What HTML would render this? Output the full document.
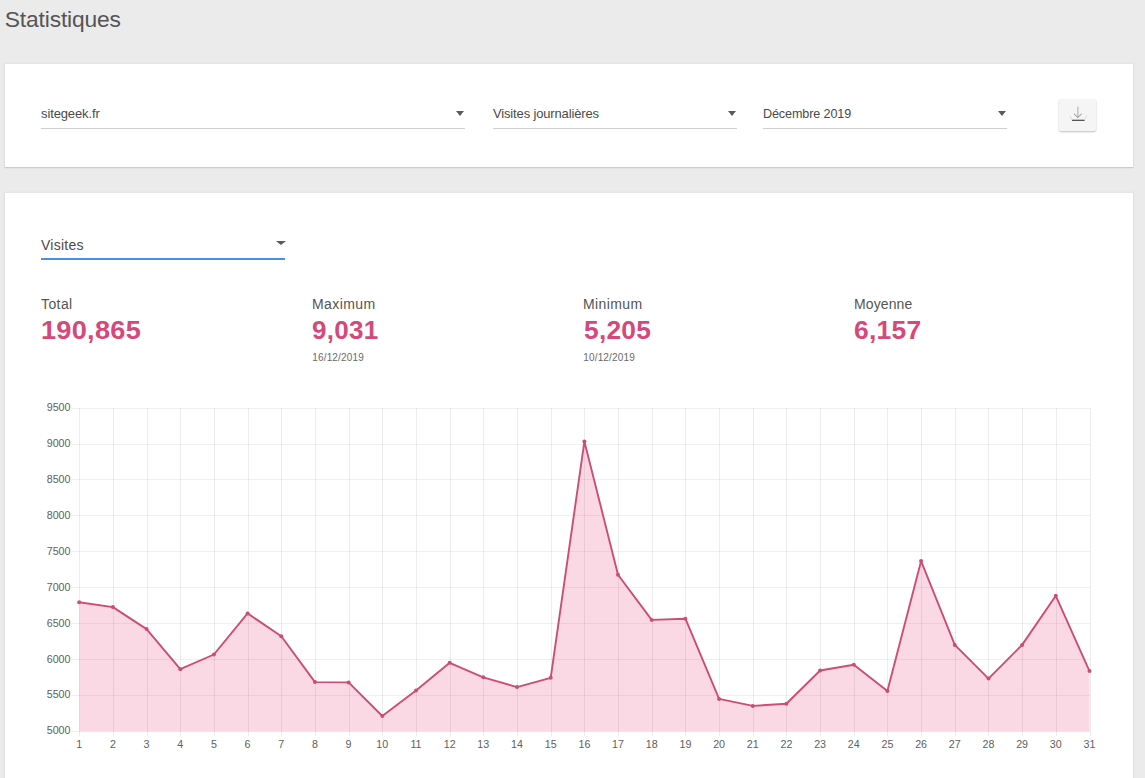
<!DOCTYPE html>
<html lang="fr"><head><meta charset="utf-8"><title>Statistiques</title>
<style>
html,body{margin:0;padding:0;}
body{width:1145px;height:778px;overflow:hidden;background:#ecebeb;font-family:"Liberation Sans",sans-serif;color:#444;position:relative;}
.abs{position:absolute;white-space:nowrap;}
h1{position:absolute;left:4.8px;top:4.5px;margin:0;font-size:22.8px;font-weight:normal;color:#555;line-height:28px;letter-spacing:-0.15px;}
.card{position:absolute;left:5px;width:1128px;background:#fff;box-shadow:0 1px 1px rgba(0,0,0,0.11),0 0 0 1.5px rgba(0,0,0,0.025);}
.c1{top:64px;height:103px;}
.c2{top:193px;height:600px;}
.sel{position:absolute;height:30px;border-bottom:1px solid #cfcfcf;font-size:13px;color:#4a4a4a;line-height:32px;}
.sel .arr{position:absolute;right:1px;top:13px;width:0;height:0;border-left:4.5px solid transparent;border-right:4.5px solid transparent;border-top:5px solid #5a5a5a;}
.sel.act{border-bottom:2px solid #4a90e2;height:28.5px;line-height:32px;letter-spacing:0.25px;}
.sel.act .arr{top:12px;border-left-width:5px;border-right-width:5px;border-top-width:4.5px;right:-0.5px;}
.btn{position:absolute;left:1059px;top:99px;width:37px;height:32px;background:#f5f5f5;border-radius:2px;box-shadow:0 1px 2px rgba(0,0,0,0.25);}
.lbl{font-size:14px;color:#555;line-height:16px;letter-spacing:0.4px;}
.val{font-size:25.5px;font-weight:bold;color:#d6487a;line-height:28px;letter-spacing:0.25px;transform:scaleX(1.05);transform-origin:0 0;margin-left:0.3px;}
.dt{font-size:10px;color:#6a6a6a;line-height:12px;letter-spacing:0.15px;}
.chart{position:absolute;left:0;top:0;}
</style></head><body>
<h1>Statistiques</h1>
<div class="card c1"></div>
<div class="card c2"></div>
<div class="sel" style="left:41px;top:98px;width:424px;letter-spacing:-0.12px;">sitegeek.fr<span class="arr"></span></div>
<div class="sel" style="left:493px;top:98px;width:244px;letter-spacing:-0.15px;">Visites journalières<span class="arr"></span></div>
<div class="sel" style="left:763px;top:98px;width:244px;font-size:12.6px;letter-spacing:-0.12px;">Décembre 2019<span class="arr"></span></div>
<div class="btn"><svg width="37" height="32" viewBox="0 0 37 32"><path d="M18.9 7.5v11" fill="none" stroke="#aaa" stroke-width="1"/><path d="M15 14.8l3.9 3.6 3.9-3.6" fill="none" stroke="#888" stroke-width="1"/><path d="M13 21.3h12.6" fill="none" stroke="#444" stroke-width="1.2"/><path d="M11 16.5l2 4.5M27.6 16.5l-2 4.5" fill="none" stroke="#ddd" stroke-width="1"/></svg></div>
<div class="sel act" style="left:41px;top:229px;width:244px;font-size:14px;">Visites<span class="arr"></span></div>

<div class="abs lbl" style="left:41px;top:296px;">Total</div>
<div class="abs val" style="left:40.4px;top:316.4px;transform:scaleX(1.065)">190,865</div>
<div class="abs lbl" style="left:312px;top:296px;">Maximum</div>
<div class="abs val" style="left:312px;top:316.4px;transform:scaleX(1.02)">9,031</div>
<div class="abs dt" style="left:312.3px;top:351.5px;">16/12/2019</div>
<div class="abs lbl" style="left:583px;top:296px;">Minimum</div>
<div class="abs val" style="left:583.3px;top:316.4px;transform:scaleX(1.031)">5,205</div>
<div class="abs dt" style="left:583.3px;top:351.5px;">10/12/2019</div>
<div class="abs lbl" style="left:854px;top:296px;letter-spacing:0.1px;">Moyenne</div>
<div class="abs val" style="left:854px;top:316.4px;transform:scaleX(1.037)">6,157</div>
<svg class="chart" width="1145" height="778" viewBox="0 0 1145 778">
<path d="M79.5 408V736.2 M113.5 408V736.2 M147.5 408V736.2 M180.5 408V736.2 M214.5 408V736.2 M248.5 408V736.2 M281.5 408V736.2 M315.5 408V736.2 M349.5 408V736.2 M382.5 408V736.2 M416.5 408V736.2 M450.5 408V736.2 M483.5 408V736.2 M517.5 408V736.2 M551.5 408V736.2 M584.5 408V736.2 M618.5 408V736.2 M652.5 408V736.2 M685.5 408V736.2 M719.5 408V736.2 M753.5 408V736.2 M786.5 408V736.2 M820.5 408V736.2 M854.5 408V736.2 M887.5 408V736.2 M921.5 408V736.2 M955.5 408V736.2 M988.5 408V736.2 M1022.5 408V736.2 M1056.5 408V736.2 M1090.5 408V736.2" stroke="rgba(0,0,0,0.075)" stroke-width="1" fill="none"/>
<path d="M72 731.5H1090 M72 695.5H1090 M72 659.5H1090 M72 623.5H1090 M72 587.5H1090 M72 551.5H1090 M72 515.5H1090 M72 479.5H1090 M72 444.5H1090 M72 408.5H1090" stroke="rgba(0,0,0,0.06)" stroke-width="1" fill="none"/>
<path d="M79.2 602.3 L112.9 607.1 L146.6 629.1 L180.3 669.2 L213.9 654.5 L247.6 613.4 L281.3 636.2 L315.0 682.1 L348.6 682.4 L382.3 716.0 L416.0 690.4 L449.7 662.8 L483.3 677.3 L517.0 687.1 L550.7 677.8 L584.4 441.4 L618.0 574.7 L651.7 619.9 L685.4 618.7 L719.1 698.9 L752.8 705.9 L786.4 703.8 L820.1 670.5 L853.8 664.7 L887.4 690.9 L921.1 561.1 L954.8 644.9 L988.5 678.6 L1022.1 644.9 L1055.8 595.8 L1089.5 671.1 L1089.5 731.2 L79.2 731.2 Z" fill="rgba(233,80,130,0.22)"/>
<path d="M79.2 602.3 L112.9 607.1 L146.6 629.1 L180.3 669.2 L213.9 654.5 L247.6 613.4 L281.3 636.2 L315.0 682.1 L348.6 682.4 L382.3 716.0 L416.0 690.4 L449.7 662.8 L483.3 677.3 L517.0 687.1 L550.7 677.8 L584.4 441.4 L618.0 574.7 L651.7 619.9 L685.4 618.7 L719.1 698.9 L752.8 705.9 L786.4 703.8 L820.1 670.5 L853.8 664.7 L887.4 690.9 L921.1 561.1 L954.8 644.9 L988.5 678.6 L1022.1 644.9 L1055.8 595.8 L1089.5 671.1" fill="none" stroke="#cc4d76" stroke-width="1.9" stroke-linejoin="round"/>
<circle cx="79.2" cy="602.3" r="2" fill="#cc4d76"/>
<circle cx="112.9" cy="607.1" r="2" fill="#cc4d76"/>
<circle cx="146.6" cy="629.1" r="2" fill="#cc4d76"/>
<circle cx="180.3" cy="669.2" r="2" fill="#cc4d76"/>
<circle cx="213.9" cy="654.5" r="2" fill="#cc4d76"/>
<circle cx="247.6" cy="613.4" r="2" fill="#cc4d76"/>
<circle cx="281.3" cy="636.2" r="2" fill="#cc4d76"/>
<circle cx="315.0" cy="682.1" r="2" fill="#cc4d76"/>
<circle cx="348.6" cy="682.4" r="2" fill="#cc4d76"/>
<circle cx="382.3" cy="716.0" r="2" fill="#cc4d76"/>
<circle cx="416.0" cy="690.4" r="2" fill="#cc4d76"/>
<circle cx="449.7" cy="662.8" r="2" fill="#cc4d76"/>
<circle cx="483.3" cy="677.3" r="2" fill="#cc4d76"/>
<circle cx="517.0" cy="687.1" r="2" fill="#cc4d76"/>
<circle cx="550.7" cy="677.8" r="2" fill="#cc4d76"/>
<circle cx="584.4" cy="441.4" r="2" fill="#cc4d76"/>
<circle cx="618.0" cy="574.7" r="2" fill="#cc4d76"/>
<circle cx="651.7" cy="619.9" r="2" fill="#cc4d76"/>
<circle cx="685.4" cy="618.7" r="2" fill="#cc4d76"/>
<circle cx="719.1" cy="698.9" r="2" fill="#cc4d76"/>
<circle cx="752.8" cy="705.9" r="2" fill="#cc4d76"/>
<circle cx="786.4" cy="703.8" r="2" fill="#cc4d76"/>
<circle cx="820.1" cy="670.5" r="2" fill="#cc4d76"/>
<circle cx="853.8" cy="664.7" r="2" fill="#cc4d76"/>
<circle cx="887.4" cy="690.9" r="2" fill="#cc4d76"/>
<circle cx="921.1" cy="561.1" r="2" fill="#cc4d76"/>
<circle cx="954.8" cy="644.9" r="2" fill="#cc4d76"/>
<circle cx="988.5" cy="678.6" r="2" fill="#cc4d76"/>
<circle cx="1022.1" cy="644.9" r="2" fill="#cc4d76"/>
<circle cx="1055.8" cy="595.8" r="2" fill="#cc4d76"/>
<circle cx="1089.5" cy="671.1" r="2" fill="#cc4d76"/>
<g font-family="Liberation Sans, sans-serif" font-size="10.7" fill="#606060">
<text x="70.5" y="734.3" text-anchor="end">5000</text>
<text x="70.5" y="698.4" text-anchor="end">5500</text>
<text x="70.5" y="662.5" text-anchor="end">6000</text>
<text x="70.5" y="626.6" text-anchor="end">6500</text>
<text x="70.5" y="590.7" text-anchor="end">7000</text>
<text x="70.5" y="554.8" text-anchor="end">7500</text>
<text x="70.5" y="518.9" text-anchor="end">8000</text>
<text x="70.5" y="483.0" text-anchor="end">8500</text>
<text x="70.5" y="447.1" text-anchor="end">9000</text>
<text x="70.5" y="411.2" text-anchor="end">9500</text>
<text x="79.2" y="747.6" text-anchor="middle">1</text>
<text x="112.9" y="747.6" text-anchor="middle">2</text>
<text x="146.6" y="747.6" text-anchor="middle">3</text>
<text x="180.3" y="747.6" text-anchor="middle">4</text>
<text x="213.9" y="747.6" text-anchor="middle">5</text>
<text x="247.6" y="747.6" text-anchor="middle">6</text>
<text x="281.3" y="747.6" text-anchor="middle">7</text>
<text x="315.0" y="747.6" text-anchor="middle">8</text>
<text x="348.6" y="747.6" text-anchor="middle">9</text>
<text x="382.3" y="747.6" text-anchor="middle">10</text>
<text x="416.0" y="747.6" text-anchor="middle">11</text>
<text x="449.7" y="747.6" text-anchor="middle">12</text>
<text x="483.3" y="747.6" text-anchor="middle">13</text>
<text x="517.0" y="747.6" text-anchor="middle">14</text>
<text x="550.7" y="747.6" text-anchor="middle">15</text>
<text x="584.4" y="747.6" text-anchor="middle">16</text>
<text x="618.0" y="747.6" text-anchor="middle">17</text>
<text x="651.7" y="747.6" text-anchor="middle">18</text>
<text x="685.4" y="747.6" text-anchor="middle">19</text>
<text x="719.1" y="747.6" text-anchor="middle">20</text>
<text x="752.8" y="747.6" text-anchor="middle">21</text>
<text x="786.4" y="747.6" text-anchor="middle">22</text>
<text x="820.1" y="747.6" text-anchor="middle">23</text>
<text x="853.8" y="747.6" text-anchor="middle">24</text>
<text x="887.4" y="747.6" text-anchor="middle">25</text>
<text x="921.1" y="747.6" text-anchor="middle">26</text>
<text x="954.8" y="747.6" text-anchor="middle">27</text>
<text x="988.5" y="747.6" text-anchor="middle">28</text>
<text x="1022.1" y="747.6" text-anchor="middle">29</text>
<text x="1055.8" y="747.6" text-anchor="middle">30</text>
<text x="1089.5" y="747.6" text-anchor="middle">31</text>
</g></svg>
</body></html>
